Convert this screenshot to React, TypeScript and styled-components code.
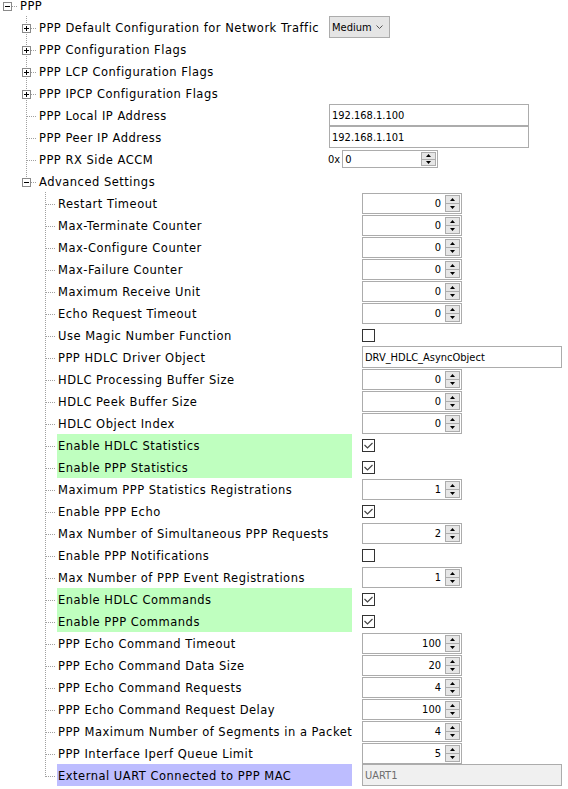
import React from "react";
import styled, { createGlobalStyle } from "styled-components";

const GlobalStyle = createGlobalStyle`
  html, body {
    margin: 0;
    padding: 0;
    background: #fff;
  }
  body {
    font-family: "DejaVu Sans", Verdana, sans-serif;
    color: #000;
    overflow: hidden;
  }
`;

const INDENT = 19;
const ROW_H = 22;
const VALUE_X: Record<number, number> = { 0: 329, 1: 329, 2: 362 };

type Control =
  | { kind: "select"; value: string }
  | { kind: "text"; value: string; disabled?: boolean }
  | { kind: "spin"; value: string }
  | { kind: "hex"; value: string }
  | { kind: "check"; checked: boolean };

type TreeNode = {
  label: string;
  control?: Control;
  highlight?: "green" | "blue";
  children?: TreeNode[];
  collapsed?: boolean;
};

type FlatRow = {
  node: TreeNode;
  level: number;
  last: boolean;
  guides: boolean[];
};

const spin = (value: string): Control => ({ kind: "spin", value });
const check = (checked: boolean): Control => ({ kind: "check", checked });

const tree: TreeNode = {
  label: "PPP",
  children: [
    { label: "PPP Default Configuration for Network Traffic", collapsed: true, control: { kind: "select", value: "Medium" } },
    { label: "PPP Configuration Flags", collapsed: true },
    { label: "PPP LCP Configuration Flags", collapsed: true },
    { label: "PPP IPCP Configuration Flags", collapsed: true },
    { label: "PPP Local IP Address", control: { kind: "text", value: "192.168.1.100" } },
    { label: "PPP Peer IP Address", control: { kind: "text", value: "192.168.1.101" } },
    { label: "PPP RX Side ACCM", control: { kind: "hex", value: "0" } },
    {
      label: "Advanced Settings",
      children: [
        { label: "Restart Timeout", control: spin("0") },
        { label: "Max-Terminate Counter", control: spin("0") },
        { label: "Max-Configure Counter", control: spin("0") },
        { label: "Max-Failure Counter", control: spin("0") },
        { label: "Maximum Receive Unit", control: spin("0") },
        { label: "Echo Request Timeout", control: spin("0") },
        { label: "Use Magic Number Function", control: check(false) },
        { label: "PPP HDLC Driver Object", control: { kind: "text", value: "DRV_HDLC_AsyncObject" } },
        { label: "HDLC Processing Buffer Size", control: spin("0") },
        { label: "HDLC Peek Buffer Size", control: spin("0") },
        { label: "HDLC Object Index", control: spin("0") },
        { label: "Enable HDLC Statistics", control: check(true), highlight: "green" },
        { label: "Enable PPP Statistics", control: check(true), highlight: "green" },
        { label: "Maximum PPP Statistics Registrations", control: spin("1") },
        { label: "Enable PPP Echo", control: check(true) },
        { label: "Max Number of Simultaneous PPP Requests", control: spin("2") },
        { label: "Enable PPP Notifications", control: check(false) },
        { label: "Max Number of PPP Event Registrations", control: spin("1") },
        { label: "Enable HDLC Commands", control: check(true), highlight: "green" },
        { label: "Enable PPP Commands", control: check(true), highlight: "green" },
        { label: "PPP Echo Command Timeout", control: spin("100") },
        { label: "PPP Echo Command Data Size", control: spin("20") },
        { label: "PPP Echo Command Requests", control: spin("4") },
        { label: "PPP Echo Command Request Delay", control: spin("100") },
        { label: "PPP Maximum Number of Segments in a Packet", control: spin("4") },
        { label: "PPP Interface Iperf Queue Limit", control: spin("5") },
        {
          label: "External UART Connected to PPP MAC",
          control: { kind: "text", value: "UART1", disabled: true },
          highlight: "blue",
        },
      ],
    },
  ],
};

const flatten = (node: TreeNode, level = 0, last = true, guides: boolean[] = []): FlatRow[] => {
  const rows: FlatRow[] = [{ node, level, last, guides }];
  const kids = node.children ?? [];
  // the root has no sibling line of its own, so it adds no guide
  const childGuides = level === 0 ? guides : [...guides, !last];
  kids.forEach((kid, i) => {
    rows.push(...flatten(kid, level + 1, i === kids.length - 1, childGuides));
  });
  return rows;
};

const HIGHLIGHT = {
  green: "#bfffbf",
  blue: "#bdbdff",
};

const Tree = styled.div`
  margin-top: -6px;
  display: flex;
  flex-direction: column;
`;

const Row = styled.div`
  display: flex;
  height: ${ROW_H}px;
  align-items: stretch;
`;

const Gutter = styled.svg`
  flex: none;
  display: block;
`;

const Label = styled.div<{ $width: number; $bg?: string }>`
  flex: none;
  display: flex;
  align-items: center;
  width: ${(p) => p.$width}px;
  margin-right: 10px;
  padding: 2px 0 0 1px;
  box-sizing: border-box;
  background: ${(p) => p.$bg ?? "transparent"};
  font-size: 11.5px;
  letter-spacing: 0.5px;
  white-space: nowrap;
`;

const ValueCell = styled.div`
  display: flex;
  align-items: center;
  gap: 2px;
`;

const controlFont = `
  font-family: "DejaVu Sans Condensed", "DejaVu Sans", sans-serif;
  font-stretch: condensed;
  font-size: 11px;
`;

const TextBox = styled.div<{ $disabled?: boolean }>`
  width: 200px;
  height: 22px;
  box-sizing: border-box;
  border: 1px solid #acacac;
  background: ${(p) => (p.$disabled ? "#f0f0f0" : "#fff")};
  color: ${(p) => (p.$disabled ? "#6d6d6d" : "#000")};
  padding-left: 2px;
  display: flex;
  align-items: center;
  ${controlFont}
`;

const SelectBox = styled.div`
  width: 61px;
  height: 22px;
  box-sizing: border-box;
  border: 1px solid #acacac;
  background: #e5e5e5;
  display: flex;
  align-items: center;
  justify-content: space-between;
  padding: 0 6px 0 2px;
  ${controlFont}
`;

const SpinBox = styled.div<{ $width: number; $height: number }>`
  width: ${(p) => p.$width}px;
  height: ${(p) => p.$height}px;
  box-sizing: border-box;
  border: 1px solid #acacac;
  background: #fff;
  display: flex;
  align-items: stretch;
  margin-top: ${(p) => (p.$height > 20 ? 1 : 0)}px;
  ${controlFont}
`;

const SpinValue = styled.div<{ $align: "left" | "right" }>`
  flex: 1;
  display: flex;
  align-items: center;
  justify-content: ${(p) => (p.$align === "right" ? "flex-end" : "flex-start")};
  padding: 0 4px 0 2px;
`;

const SpinButtons = styled.div`
  width: 15px;
  display: flex;
  flex-direction: column;
  padding: 1px 1px 1px 0;
`;

const SpinButton = styled.div`
  flex: 1;
  background: #e6e6e6;
  border: 1px solid #acacac;
  display: flex;
  align-items: center;
  justify-content: center;
  & + & {
    border-top: none;
  }
`;

const CheckBox = styled.div`
  width: 13px;
  height: 13px;
  box-sizing: border-box;
  border: 1px solid #333;
  background: #fff;
  display: flex;
  align-items: center;
  justify-content: center;
`;

const Prefix = styled.span`
  ${controlFont}
  margin-left: -1px;
`;

const TreeGutter = ({ row }: { row: FlatRow }) => {
  const { level, last, guides, node } = row;
  const width = level * INDENT + INDENT;
  const cx = level * INDENT + 7.5;
  const cy = 12.5;
  const hasBox = !!node.children || node.collapsed;
  const bx = level * INDENT + 3;
  const dots = { stroke: "#a0a0a0", strokeWidth: 1, strokeDasharray: "1 1" };
  return (
    <Gutter width={width} height={ROW_H} shapeRendering="crispEdges">
      {guides.map((on, i) =>
        on ? <line key={i} x1={(i + 1) * INDENT + 7.5} y1={0} x2={(i + 1) * INDENT + 7.5} y2={ROW_H} {...dots} /> : null
      )}
      {level > 0 && <line x1={cx} y1={0} x2={cx} y2={last ? cy : ROW_H} {...dots} />}
      <line x1={cx} y1={cy} x2={width - 1} y2={cy} {...dots} />
      {hasBox && (
        <g>
          <rect x={bx + 0.5} y={8.5} width={8} height={8} fill="#fff" stroke="#8a8a8a" />
          <line x1={bx + 2} y1={cy} x2={bx + 7} y2={cy} stroke="#000" />
          {node.collapsed && <line x1={bx + 4.5} y1={10} x2={bx + 4.5} y2={15} stroke="#000" />}
        </g>
      )}
    </Gutter>
  );
};

const Arrow = ({ up }: { up: boolean }) => (
  <svg width={5} height={3} style={{ display: "block" }}>
    <polygon points={up ? "2.5,0 5,3 0,3" : "0,0 5,0 2.5,3"} fill="#000" />
  </svg>
);

const Spinner = ({ value, width, height, align }: { value: string; width: number; height: number; align: "left" | "right" }) => (
  <SpinBox $width={width} $height={height}>
    <SpinValue $align={align}>{value}</SpinValue>
    <SpinButtons>
      <SpinButton>
        <Arrow up />
      </SpinButton>
      <SpinButton>
        <Arrow up={false} />
      </SpinButton>
    </SpinButtons>
  </SpinBox>
);

const ControlView = ({ control }: { control: Control }) => {
  switch (control.kind) {
    case "select":
      return (
        <SelectBox>
          <span>{control.value}</span>
          <svg width={7} height={4} style={{ display: "block" }}>
            <polyline points="0.5,0.5 3.5,3.5 6.5,0.5" fill="none" stroke="#555" />
          </svg>
        </SelectBox>
      );
    case "text":
      return <TextBox $disabled={control.disabled}>{control.value}</TextBox>;
    case "spin":
      return <Spinner value={control.value} width={100} height={21} align="right" />;
    case "hex":
      return (
        <>
          <Prefix>0x</Prefix>
          <Spinner value={control.value} width={96} height={18} align="left" />
        </>
      );
    case "check":
      return (
        <CheckBox>
          {control.checked && (
            <svg width={9} height={7} style={{ display: "block" }}>
              <polyline points="0.5,3 3.5,6 8.5,1" fill="none" stroke="#444" strokeWidth={1.2} />
            </svg>
          )}
        </CheckBox>
      );
  }
};

const ConfigRow = ({ row }: { row: FlatRow }) => {
  const labelStart = row.level * INDENT + INDENT;
  const labelWidth = VALUE_X[row.level] - 10 - labelStart;
  const { node } = row;
  return (
    <Row>
      <TreeGutter row={row} />
      <Label $width={labelWidth} $bg={node.highlight ? HIGHLIGHT[node.highlight] : undefined}>
        {node.label}
      </Label>
      {node.control && (
        <ValueCell>
          <ControlView control={node.control} />
        </ValueCell>
      )}
    </Row>
  );
};

export default function App() {
  const rows = flatten(tree);
  return (
    <>
      <GlobalStyle />
      <Tree>
        {rows.map((row, i) => (
          <ConfigRow key={i} row={row} />
        ))}
      </Tree>
    </>
  );
}
